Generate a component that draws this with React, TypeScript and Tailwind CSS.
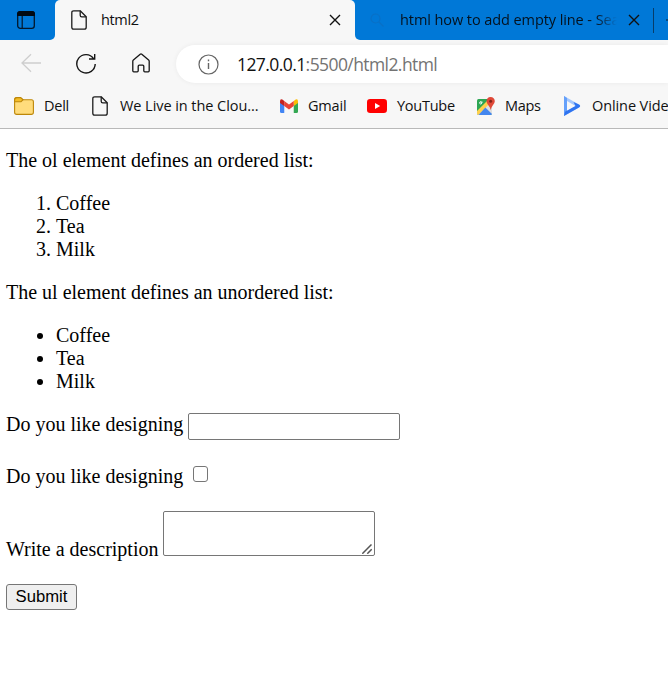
import React from "react";

const ui = "font-['Open_Sans','Noto_Sans',sans-serif] whitespace-pre text-[#111]";

function PageIcon() {
  return (
    <svg className="block shrink-0" width="16" height="20" viewBox="0 0 16 20" fill="none" stroke="#1b1b1b" strokeWidth="1.3" strokeLinejoin="round">
      <path d="M2.7.8H9.2L15.2 6.8V17.2Q15.2 19.2 13.2 19.2H2.7Q.8 19.2.8 17.2V2.8Q.8.8 2.7.8Z" />
      <path d="M9.2.8V5.2Q9.2 6.8 10.8 6.8H15.2" />
    </svg>
  );
}

function Close() {
  return (
    <svg className="block shrink-0" width="12" height="12" viewBox="0 0 12 12" stroke="#111" strokeWidth="1.4">
      <path d="M1 1L11 11M11 1L1 11" />
    </svg>
  );
}

function TabStrip() {
  return (
    <div className="flex h-10 bg-[#f7f7f7]">
      <div className="flex w-[55px] shrink-0 bg-[#f7f7f7]">
        <div className="h-10 w-full rounded-br-[5px] bg-[#0078d7] pl-[17px] pt-[11px]">
          <svg className="block" width="18" height="18" viewBox="0 0 18 18" fill="none">
            <rect x=".7" y=".7" width="16.6" height="16.6" rx="2.6" stroke="#03172a" strokeWidth="1.3" />
            <path d="M0 5V3Q0 0 3 0H15Q18 0 18 3V5Z" fill="#020a12" />
            <path d="M5.2 5V17" stroke="#03172a" strokeWidth="1.2" />
          </svg>
        </div>
      </div>
      <div className="h-10 w-[300px] shrink-0 bg-[#0078d7]">
        <div className="flex h-10 items-center rounded-t-[5px] bg-[#f7f7f7] pl-4">
          <PageIcon />
          <span className={`${ui} ml-[14px] w-[228px] text-[14.5px] leading-5 tracking-[-0.35px]`}>html2</span>
          <Close />
        </div>
      </div>
      <div className="flex h-10 flex-1 items-center overflow-hidden rounded-bl-[5px] bg-[#0078d7] pl-[15px]">
        <svg className="block shrink-0" width="15" height="14" viewBox="0 0 15 14" fill="none" stroke="#0870c6" strokeWidth="1.2">
          <circle cx="5.5" cy="5.5" r="4.5" />
          <path d="M9 9L13.5 13.5" />
        </svg>
        <span className={`${ui} ml-[15px] w-[217px] shrink-0 overflow-hidden bg-linear-to-r from-[#04111d] from-90% to-[#0078d7] bg-clip-text text-[14.5px] leading-5 tracking-[-0.08px] text-transparent`}>
          html how to add empty line - Sea
        </span>
        <span className="ml-[11px]"><Close /></span>
        <span className="ml-[13px] h-[25px] w-px shrink-0 bg-[#073d6a]" />
        <svg className="ml-[12px] block shrink-0" width="14" height="14" viewBox="0 0 14 14" stroke="#073d6a" strokeWidth="1.3">
          <path d="M0 7H14M7 0V14" />
        </svg>
      </div>
    </div>
  );
}

function Toolbar() {
  return (
    <div className="flex h-[48px] pt-[5px]">
      <svg className="ml-[21px] mt-[8px] block shrink-0" width="20" height="20" viewBox="0 0 20 20" fill="none" stroke="#cecece" strokeWidth="1.3">
        <path d="M20 10H1M10 1.3L1 10L10 18.7" />
      </svg>
      <svg className="ml-[35px] mt-[8px] block shrink-0" width="20" height="21" viewBox="0 0 20 21" fill="none" stroke="#151515" strokeWidth="1.4">
        <path d="M17.6 5.6A9.2 9.2 0 1 0 19.2 11M18.7 1V6H13" />
      </svg>
      <svg className="ml-[36px] mt-[8px] block shrink-0" width="18" height="20" viewBox="0 0 18 20" fill="none" stroke="#151515" strokeWidth="1.3" strokeLinejoin="round">
        <path d="M.8 8.2Q.8 7.5 1.4 7L8.2 1.2Q9 .6 9.8 1.2L16.6 7Q17.2 7.5 17.2 8.2V17.8Q17.2 18.8 16.2 18.8H12.8Q11.8 18.8 11.8 17.8V13.3Q11.8 12.2 10.7 12.2H7.3Q6.2 12.2 6.2 13.3V17.8Q6.2 18.8 5.2 18.8H1.8Q.8 18.8.8 17.8Z" />
      </svg>
      <div className="ml-[26px] flex h-[38px] flex-1 items-center rounded-l-full bg-white pl-[22px] shadow-[0_0_5px_rgba(0,0,0,0.06)]">
        <svg className="block shrink-0" width="21" height="21" viewBox="0 0 21 21" fill="none" stroke="#656565" strokeWidth="1.2">
          <circle cx="10.5" cy="10.5" r="9.5" />
          <path d="M10.5 9V15M10.5 5.5V7.2" strokeWidth="1.4" />
        </svg>
        <span className={`${ui} ml-[18px] text-[17.5px] leading-6 tracking-[-0.58px]`}>
          127.0.0.1<span className="text-[#737373]">:5500/html2.html</span>
        </span>
      </div>
    </div>
  );
}

function Bookmarks() {
  const label = `${ui} shrink-0 text-[14.5px] leading-5`;
  return (
    <div className="flex h-[40px] items-center overflow-hidden pb-[4px] pl-[14px]">
      <svg className="block shrink-0" width="20" height="18" viewBox="0 0 20 18" fill="#ffdc7c" stroke="#bd8709" strokeWidth="1.1">
        <path d="M.6 3Q.6.6 3 .6H6.5L9 2.7H17.5Q19.4 2.7 19.4 4.7V15.3Q19.4 17.4 17.3 17.4H2.7Q.6 17.4.6 15.3Z" />
        <path d="M.6 4.8V3Q.6.6 3 .6H6.5L9 2.7L7 4.8Z" fill="#f4bd27" />
      </svg>
      <span className={`${label} ml-[10px] w-[48px] tracking-[-0.25px]`}>Dell</span>
      <PageIcon />
      <span className={`${label} ml-[12px] w-[160px] tracking-[-0.06px]`}>We Live in the Clou...</span>
      <svg className="block shrink-0" width="18" height="14" viewBox="0 0 19 14" preserveAspectRatio="none">
        <path d="M0 3L4.5 5V14H1.5Q0 14 0 12.5Z" fill="#4285f4" />
        <path d="M14.5 5L19 3V12.5Q19 14 17.5 14H14.5Z" fill="#34a853" />
        <path d="M14.5 2L16.5.5Q19-.5 19 2.5V4L14.5 7Z" fill="#fbbc04" />
        <path d="M4.5 2L9.5 5.5L14.5 2V7L9.5 10.5L4.5 7Z" fill="#ea4335" />
        <path d="M0 2.5Q0-.5 2.5.5L4.5 2V7L0 4Z" fill="#c5221f" />
      </svg>
      <span className={`${label} ml-[10px] w-[59px] tracking-[-0.2px]`}>Gmail</span>
      <svg className="block shrink-0" width="20" height="14" viewBox="0 0 20 14">
        <rect width="20" height="14" rx="3.2" fill="#f00" />
        <path d="M8 4L13.2 7L8 10Z" fill="white" />
      </svg>
      <span className={`${label} ml-[10px] w-[79px] tracking-[-0.25px]`}>YouTube</span>
      <svg className="block shrink-0" width="19" height="19" viewBox="0 0 19 19">
        <rect x="1" y="2" width="15" height="16" rx="1.5" fill="#2da653" />
        <path d="M1 16L14 3L16 5V17L15 18H2Q1 18 1 16Z" fill="#dedede" />
        <path d="M1 14L12 3L15 5L2.5 18Q1 18 1 16Z" fill="#ffd04b" />
        <path d="M2.5 18L9.3 10.5L16 17L15 18Z" fill="#4386ee" />
        <path d="M6.7 5.2H4.9V6.2H5.7Q5.4 7.2 4.5 7Q3.3 6.7 3.6 5.4Q4.2 4 5.5 4.9" fill="none" stroke="white" strokeWidth=".9" />
        <path d="M14.5 0Q18.6.3 18.8 4.2Q18.8 6.2 16.7 8.4Q15.3 10 14.7 13Q14.1 10 12.5 8.4Q10.5 6.2 10.5 4.2Q10.7.3 14.5 0Z" fill="#df4938" />
        <circle cx="14.6" cy="4.3" r="1.5" fill="#812318" />
      </svg>
      <span className={`${label} ml-[10px] w-[59px] tracking-[-0.3px]`}>Maps</span>
      <svg className="block shrink-0" width="17" height="20" viewBox="0 0 17 20">
        <path d="M0 0L15 8.6Q17.3 10.1 15 11.6L0 20ZM3 5V15L11.5 10Z" fill="#a5c8fd" fillRule="evenodd" />
        <path d="M0 0L3 2V16L0 20Z" fill="#65a0fa" />
        <path d="M0 20L1 15.8L11.5 10L9.5 6L15 8.6Q17.3 10.1 15 11.6Z" fill="#2f74f0" />
      </svg>
      <span className={`${label} ml-[11px] tracking-[-0.1px]`}>Online Videos</span>
    </div>
  );
}

export default function App() {
  return (
    <div className="h-[678px] w-[668px] overflow-hidden bg-white">
      <header className="h-[129px] border-b border-[#b9b9b9] bg-[#f7f7f7]">
        <TabStrip />
        <Toolbar />
        <Bookmarks />
      </header>
      <main className="pl-[6px] pt-5 font-['Liberation_Serif',serif] text-[20px] leading-[23px] text-black">
        <p>The ol element defines an ordered list:</p>
        <ol className="my-5 list-decimal pl-[50px]">
          <li>Coffee</li>
          <li>Tea</li>
          <li>Milk</li>
        </ol>
        <p>The ul element defines an unordered list:</p>
        <ul className="my-5 list-disc pl-[50px]">
          <li>Coffee</li>
          <li>Tea</li>
          <li>Milk</li>
        </ul>
        <form onSubmit={(e) => e.preventDefault()}>
          <div className="flex h-[52px] items-start">
            <label className="w-[182px]" htmlFor="q">Do you like designing</label>
            <input id="q" className="h-[27px] w-[212px] rounded-[2px] border border-[#767676] bg-white px-1 text-base" />
          </div>
          <div className="flex h-[46px] items-start">
            <label className="w-[187px]" htmlFor="c">Do you like designing</label>
            <input id="c" type="checkbox" className="mt-[1px] h-[16px] w-[15px] appearance-none rounded-[3px] border border-[#767676] bg-white" />
          </div>
          <div className="flex h-[73px] items-start">
            <label className="mt-[27px] w-[157px]" htmlFor="d">Write a description</label>
            <div className="relative h-[45px] w-[212px]">
              <textarea id="d" className="block h-full w-full resize-none rounded-[2px] border border-[#767676] bg-white p-[2px]" />
              <svg className="pointer-events-none absolute bottom-[2px] right-[3px]" width="10" height="10" viewBox="0 0 10 10" stroke="#555" strokeWidth="1.5">
                <path d="M.3 9.7L9.5.5M5.3 9.7L9.7 5.3" />
              </svg>
            </div>
          </div>
          <button className="block h-[26px] w-[71px] rounded-[3px] border border-[#767676] bg-[#efefef] font-['Liberation_Sans',sans-serif] text-[16.67px] leading-[22px]">Submit</button>
        </form>
      </main>
    </div>
  );
}
